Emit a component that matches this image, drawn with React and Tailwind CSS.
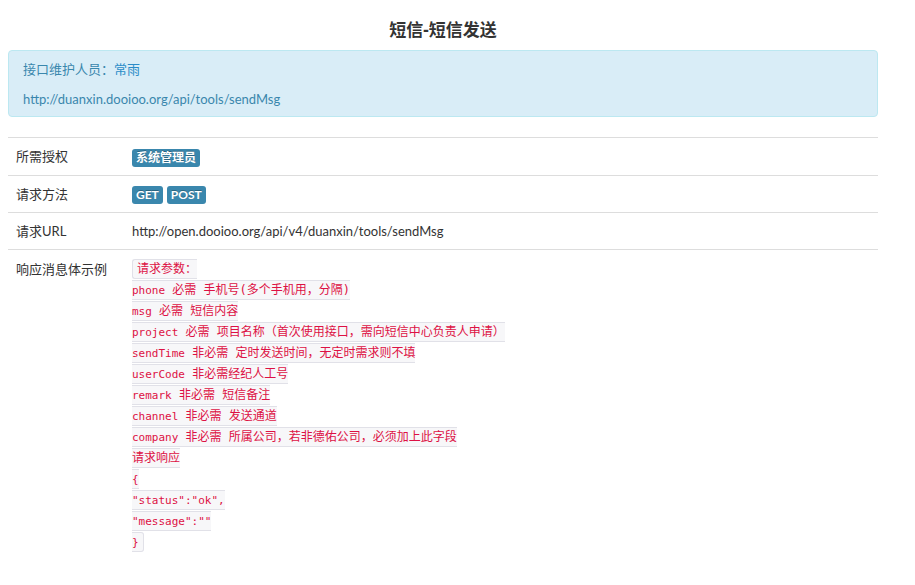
import React from "react";

const lines = [
  { k: "", t: "请求参数：" },
  { k: "phone", t: " 必需 手机号(多个手机用，分隔)" },
  { k: "msg", t: " 必需 短信内容" },
  { k: "project", t: " 必需 项目名称（首次使用接口，需向短信中心负责人申请）" },
  { k: "sendTime", t: " 非必需 定时发送时间，无定时需求则不填" },
  { k: "userCode", t: " 非必需经纪人工号" },
  { k: "remark", t: " 非必需 短信备注" },
  { k: "channel", t: " 非必需 发送通道" },
  { k: "company", t: " 非必需 所属公司，若非德佑公司，必须加上此字段" },
  { k: "", t: "请求响应" },
  { k: "{", t: "" },
  { k: "\"status\":\"ok\",", t: "" },
  { k: "\"message\":\"\"", t: "" },
  { k: "}", t: "" },
];

function Badge({ children }) {
  return (
    <span className="inline-block align-middle rounded-[3px] bg-[#3a87ad] px-1 py-[2px] text-[12px] font-bold leading-[14px] text-white [text-shadow:0_-1px_0_rgba(0,0,0,0.25)]">
      {children}
    </span>
  );
}

function Row({ label, children }) {
  return (
    <div className="flex border-t border-[#dddddd]">
      <div className="w-[116px] shrink-0 px-2 py-2">{label}</div>
      <div className="flex-1 py-2 pl-2">{children}</div>
    </div>
  );
}

export default function App() {
  return (
    <div className="min-h-[585px] w-[915px] bg-white font-['Lato','Noto_Sans_CJK_SC',sans-serif] text-[#333333]">
      <div className="ml-2 w-[870px]">
        <h3 className="mb-[10px] pt-5 text-center font-['Noto_Sans','Noto_Sans_CJK_SC',sans-serif] text-[17px] font-bold leading-5">
          短信-短信发送
        </h3>
        <div className="rounded border border-[#bce8f1] bg-[#d9edf7] pb-[7px] pl-[14px] pt-2 text-[13px] leading-5 text-[#3a87ad]">
          <p className="mb-[10px]">
            接口维护人员：<span className="text-[#2a8cc8]">常雨</span>
          </p>
          <p>http://duanxin.dooioo.org/api/tools/sendMsg</p>
        </div>
        <div className="mt-5 text-[13px] leading-5">
          <Row label="所需授权">
            <Badge>系统管理员</Badge>
          </Row>
          <Row label="请求方法">
            <span className="inline-flex gap-1 align-middle">
              <Badge>GET</Badge>
              <Badge>POST</Badge>
            </span>
          </Row>
          <Row label="请求URL">http://open.dooioo.org/api/v4/duanxin/tools/sendMsg</Row>
          <div className="flex border-t border-[#dddddd]">
            <div className="w-[116px] shrink-0 px-2 pt-[9px]">响应消息体示例</div>
            <div className="flex-1 pl-2 pt-[9px] font-['DejaVu_Sans_Mono','Noto_Sans_CJK_SC',monospace] text-[12px] leading-[21px]">
              <code className="rounded-[3px] border border-[#e1e1e8] bg-[#f7f7f9] px-1 py-[2px] font-['DejaVu_Sans_Mono','Noto_Sans_CJK_SC',monospace] text-[12px] leading-[21px] text-[#dd1144]">
                {lines.map((l, i) => (
                  <React.Fragment key={i}>
                    {l.k && <span className="text-[11px] leading-none">{l.k}</span>}
                    {l.t}
                    {i < lines.length - 1 && <br />}
                  </React.Fragment>
                ))}
              </code>
            </div>
          </div>
        </div>
      </div>
    </div>
  );
}
